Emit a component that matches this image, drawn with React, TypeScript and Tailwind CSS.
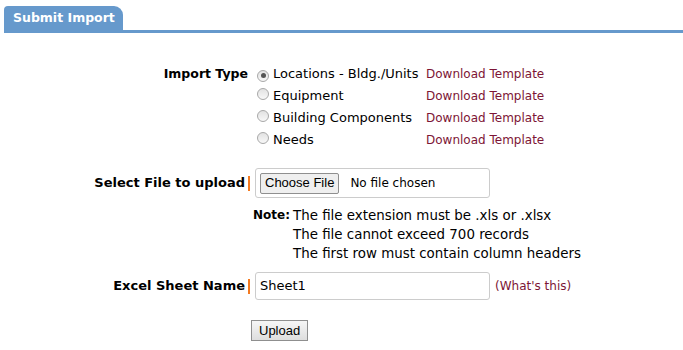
const types = ["Locations - Bldg./Units", "Equipment", "Building Components", "Needs"];

function Radio({ checked }: { checked?: boolean }) {
  return (
    <span className="inline-flex h-[12px] w-[12px] shrink-0 items-center justify-center rounded-full border border-[#a8a8a8] bg-gradient-to-b from-[#e2e2e2] to-[#f8f8f8]">
      {checked && <span className="h-[5px] w-[5px] rounded-full bg-[#555]" />}
    </span>
  );
}

function Bar() {
  return <span className="ml-[3px] inline-block h-[15px] w-[2px] bg-[#f47a20]" />;
}

export default function App() {
  return (
    <div className="h-[350px] w-[683px] bg-white pl-[4px] pt-[6px] text-[13px] text-black [font-family:'DejaVu_Sans',Verdana,sans-serif]">
      <div className="border-b-[3px] border-[#6699cc]">
        <div className="flex h-[24px] w-[119px] items-center rounded-tl-[4px] rounded-tr-[9px] bg-[#6699cc] pl-[9px] text-[12.5px] font-bold text-white">
          Submit Import
        </div>
      </div>

      <div className="mt-[30px] flex">
        <div className="flex h-[22px] w-[244px] items-center justify-end text-[12.5px] font-bold">Import Type</div>
        <div className="flex flex-col">
          {types.map((t, i) => (
            <div key={t} className="flex h-[22px] items-center">
              <span className="ml-[9px]">
                <Radio checked={i === 0} />
              </span>
              <span className="ml-[4px] w-[153px] whitespace-nowrap">{t}</span>
              <span className="text-[12px] text-[#7d1535]">Download Template</span>
            </div>
          ))}
        </div>
      </div>

      <div className="mt-[17px] flex items-center">
        <div className="flex w-[246px] items-center justify-end font-bold">
          Select File to upload
          <Bar />
        </div>
        <div className="ml-[5px] flex h-[30px] w-[235px] items-center rounded-[3px] border border-[#cccccc] pl-[4px]">
          <span className="flex h-[21px] items-center rounded-[2px] border border-[#8f8f8f] bg-[#efefef] px-[4px] text-[13px] [font-family:'Liberation_Sans',Arial,sans-serif]">
            Choose File
          </span>
          <span className="ml-[11px] text-[12px]">No file chosen</span>
        </div>
      </div>

      <div className="ml-[249px] mt-[8px] flex text-[13.4px] leading-[19px]">
        <span className="w-[40px] text-[12px] font-bold">Note:</span>
        <div>
          <div>The file extension must be .xls or .xlsx</div>
          <div>The file cannot exceed 700 records</div>
          <div>The first row must contain column headers</div>
        </div>
      </div>

      <div className="mt-[9px] flex items-center">
        <div className="flex w-[246px] items-center justify-end font-bold">
          Excel Sheet Name
          <Bar />
        </div>
        <div className="ml-[5px] flex h-[28px] w-[235px] items-center rounded-[3px] border border-[#cccccc] pl-[4px]">
          Sheet1
        </div>
        <span className="ml-[5px] text-[12px] text-[#7d1535]">(What's this)</span>
      </div>

      <div className="ml-[247px] mt-[20px]">
        <span className="inline-flex h-[21px] items-center border border-[#8f8f8f] bg-gradient-to-b from-[#f6f6f6] to-[#dedede] px-[7px] text-[13px] [font-family:'Liberation_Sans',Arial,sans-serif]">
          Upload
        </span>
      </div>
    </div>
  );
}
